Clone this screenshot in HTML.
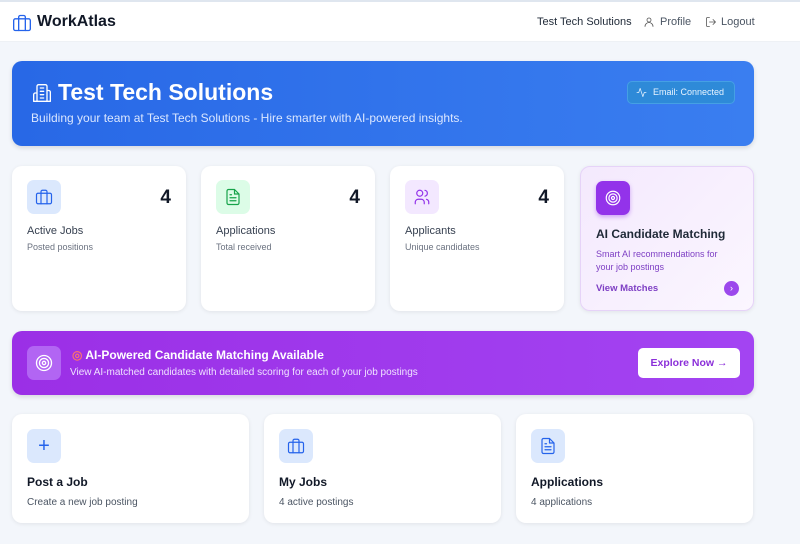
<!DOCTYPE html>
<html><head><meta charset="utf-8"><style>
*{box-sizing:border-box;margin:0;padding:0}
body{width:800px;height:544px;overflow:hidden;background:#f3f6fb;font-family:"Liberation Sans",sans-serif;color:#111827;position:relative}
.nav{position:absolute;left:0;top:0;width:800px;height:42px;background:#fff;border-top:2px solid #dfe6ef;border-bottom:1px solid #eef1f5}
.abs{position:absolute}
.card{position:absolute;background:#fff;border-radius:10px;box-shadow:0 1px 4px rgba(0,0,0,.08)}
.ib{position:absolute;width:34px;height:34px;border-radius:7px;display:flex;align-items:center;justify-content:center}
svg{fill:none;stroke-width:1.6;stroke-linecap:round;stroke-linejoin:round}
</style></head><body>
<div class="nav">
 <svg class="abs" style="left:12px;top:11px" width="20" height="20" viewBox="0 0 24 24" stroke="#2563eb"><rect x="2" y="7" width="20" height="14" rx="2"/><path d="M16 21V5a2 2 0 0 0-2-2h-4a2 2 0 0 0-2 2v16"/></svg>
 <div class="abs" style="left:37px;top:11px;font-size:16px;font-weight:bold">WorkAtlas</div>
 <div class="abs" style="left:537px;top:14px;font-size:11px;color:#1f2937">Test Tech Solutions</div>
 <svg class="abs" style="left:643px;top:14px" width="12" height="12" viewBox="0 0 24 24" stroke="#555"><circle cx="12" cy="8" r="4"/><path d="M4 21a8 8 0 0 1 16 0"/></svg>
 <div class="abs" style="left:660px;top:14px;font-size:11px;color:#4b5563">Profile</div>
 <svg class="abs" style="left:705px;top:14px" width="12" height="12" viewBox="0 0 24 24" stroke="#555"><path d="M9 21H5a2 2 0 0 1-2-2V5a2 2 0 0 1 2-2h4M16 17l5-5-5-5M21 12H9"/></svg>
 <div class="abs" style="left:721px;top:14px;font-size:11px;color:#4b5563">Logout</div>
</div>
<div class="abs" style="left:12px;top:61px;width:742px;height:85px;border-radius:10px;background:linear-gradient(90deg,#2868e6,#3a7ef0);box-shadow:0 2px 5px rgba(0,0,0,.12)">
 <svg class="abs" style="left:20px;top:22px" width="20" height="20" viewBox="0 0 24 24" stroke="#fff"><path d="M6 22V4a2 2 0 0 1 2-2h8a2 2 0 0 1 2 2v18zM6 12H4a2 2 0 0 0-2 2v8h4M18 9h2a2 2 0 0 1 2 2v11h-4M10 6h4M10 10h4M10 14h4M10 18h4"/></svg>
 <div class="abs" style="left:46px;top:18px;font-size:23px;font-weight:bold;color:#fff">Test Tech Solutions</div>
 <div class="abs" style="left:19px;top:50px;font-size:12px;color:#dbe7ff">Building your team at Test Tech Solutions - Hire smarter with AI-powered insights.</div>
 <div class="abs" style="left:615px;top:20px;width:108px;height:23px;border-radius:5px;background:#2e8ad8;border:1px solid #45a0e4;color:#e8f4ff;font-size:9px;line-height:21px;padding-left:25px">Email: Connected</div>
 <svg class="abs" style="left:624px;top:26px" width="11" height="11" viewBox="0 0 24 24" stroke="#e8f4ff"><path d="M22 12h-4l-3 9L9 3l-3 9H2"/></svg>
</div>

<div class="card" style="left:12px;top:166px;width:174px;height:145px">
 <div class="ib" style="left:15px;top:14px;background:#dbe8fd"><svg width="18" height="18" viewBox="0 0 24 24" stroke="#2563eb"><rect x="2" y="7" width="20" height="14" rx="2"/><path d="M16 21V5a2 2 0 0 0-2-2h-4a2 2 0 0 0-2 2v16"/></svg></div>
 <div class="abs" style="right:15px;top:21px;font-size:19px;font-weight:bold">4</div>
 <div class="abs" style="left:15px;top:59px;font-size:11px;color:#374151">Active Jobs</div>
 <div class="abs" style="left:15px;top:76px;font-size:9px;color:#6b7280">Posted positions</div>
</div>
<div class="card" style="left:201px;top:166px;width:174px;height:145px">
 <div class="ib" style="left:15px;top:14px;background:#dcfce7"><svg width="18" height="18" viewBox="0 0 24 24" stroke="#16a34a"><path d="M14 2H6a2 2 0 0 0-2 2v16a2 2 0 0 0 2 2h12a2 2 0 0 0 2-2V8zM14 2v6h6M16 13H8M16 17H8M10 9H8"/></svg></div>
 <div class="abs" style="right:15px;top:21px;font-size:19px;font-weight:bold">4</div>
 <div class="abs" style="left:15px;top:59px;font-size:11px;color:#374151">Applications</div>
 <div class="abs" style="left:15px;top:76px;font-size:9px;color:#6b7280">Total received</div>
</div>
<div class="card" style="left:390px;top:166px;width:174px;height:145px">
 <div class="ib" style="left:15px;top:14px;background:#f3e8ff"><svg width="18" height="18" viewBox="0 0 24 24" stroke="#9333ea"><circle cx="9" cy="7" r="4"/><path d="M3 21v-2a4 4 0 0 1 4-4h4a4 4 0 0 1 4 4v2M16 3.1a4 4 0 0 1 0 7.8M21 21v-2a4 4 0 0 0-3-3.9"/></svg></div>
 <div class="abs" style="right:15px;top:21px;font-size:19px;font-weight:bold">4</div>
 <div class="abs" style="left:15px;top:59px;font-size:11px;color:#374151">Applicants</div>
 <div class="abs" style="left:15px;top:76px;font-size:9px;color:#6b7280">Unique candidates</div>
</div>
<div class="card" style="left:580px;top:166px;width:174px;height:145px;background:linear-gradient(135deg,#f4e9fd,#fbf6ff);border:1px solid #e6d3f8">
 <div class="ib" style="left:15px;top:14px;background:#9333ea;box-shadow:0 2px 4px rgba(147,51,234,.4)"><svg width="18" height="18" viewBox="0 0 24 24" stroke="#fff"><circle cx="12" cy="12" r="9"/><circle cx="12" cy="12" r="5.5"/><circle cx="12" cy="12" r="2"/></svg></div>
 <div class="abs" style="left:15px;top:60px;font-size:12px;font-weight:bold;color:#1f2937">AI Candidate Matching</div>
 <div class="abs" style="left:15px;top:81px;font-size:9px;line-height:13px;color:#7e3fc4;width:140px">Smart AI recommendations for your job postings</div>
 <div class="abs" style="left:15px;top:116px;font-size:9.5px;font-weight:bold;color:#7e3fc4">View Matches</div>
 <div class="abs" style="left:143px;top:114px;width:15px;height:15px;border-radius:50%;background:#9c48ec;color:#fff;font-size:9px;text-align:center;line-height:15px">›</div>
</div>

<div class="abs" style="left:12px;top:331px;width:742px;height:64px;border-radius:10px;background:linear-gradient(90deg,#9b2fe6,#a344f2);box-shadow:0 2px 5px rgba(0,0,0,.12)">
 <div class="ib" style="left:15px;top:15px;background:#b265f3"><svg width="20" height="20" viewBox="0 0 24 24" stroke="#fff"><circle cx="12" cy="12" r="9"/><circle cx="12" cy="12" r="5.5"/><circle cx="12" cy="12" r="2"/></svg></div>
 <div class="abs" style="left:60px;top:17px;font-size:12px;font-weight:bold;color:#fff"><span style="color:#f87171">◎</span> AI-Powered Candidate Matching Available</div>
 <div class="abs" style="left:58px;top:36px;font-size:10px;color:#efe2ff">View AI-matched candidates with detailed scoring for each of your job postings</div>
 <div class="abs" style="left:626px;top:17px;width:102px;height:30px;border-radius:5px;background:#fff;color:#8b2fd9;font-size:10.5px;font-weight:bold;text-align:center;line-height:30px">Explore Now →</div>
</div>

<div class="card" style="left:12px;top:414px;width:237px;height:109px">
 <div class="ib" style="left:15px;top:15px;background:#dbe8fd;color:#2563eb;font-size:20px">+</div>
 <div class="abs" style="left:15px;top:61px;font-size:12px;font-weight:bold">Post a Job</div>
 <div class="abs" style="left:15px;top:83px;font-size:10px;color:#4b5563">Create a new job posting</div>
</div>
<div class="card" style="left:264px;top:414px;width:237px;height:109px">
 <div class="ib" style="left:15px;top:15px;background:#dbe8fd"><svg width="18" height="18" viewBox="0 0 24 24" stroke="#2563eb"><rect x="2" y="7" width="20" height="14" rx="2"/><path d="M16 21V5a2 2 0 0 0-2-2h-4a2 2 0 0 0-2 2v16"/></svg></div>
 <div class="abs" style="left:15px;top:61px;font-size:12px;font-weight:bold">My Jobs</div>
 <div class="abs" style="left:15px;top:83px;font-size:10px;color:#4b5563">4 active postings</div>
</div>
<div class="card" style="left:516px;top:414px;width:237px;height:109px">
 <div class="ib" style="left:15px;top:15px;background:#dbe8fd"><svg width="18" height="18" viewBox="0 0 24 24" stroke="#2563eb"><path d="M14 2H6a2 2 0 0 0-2 2v16a2 2 0 0 0 2 2h12a2 2 0 0 0 2-2V8zM14 2v6h6M16 13H8M16 17H8M10 9H8"/></svg></div>
 <div class="abs" style="left:15px;top:61px;font-size:12px;font-weight:bold">Applications</div>
 <div class="abs" style="left:15px;top:83px;font-size:10px;color:#4b5563">4 applications</div>
</div>
</body></html>
